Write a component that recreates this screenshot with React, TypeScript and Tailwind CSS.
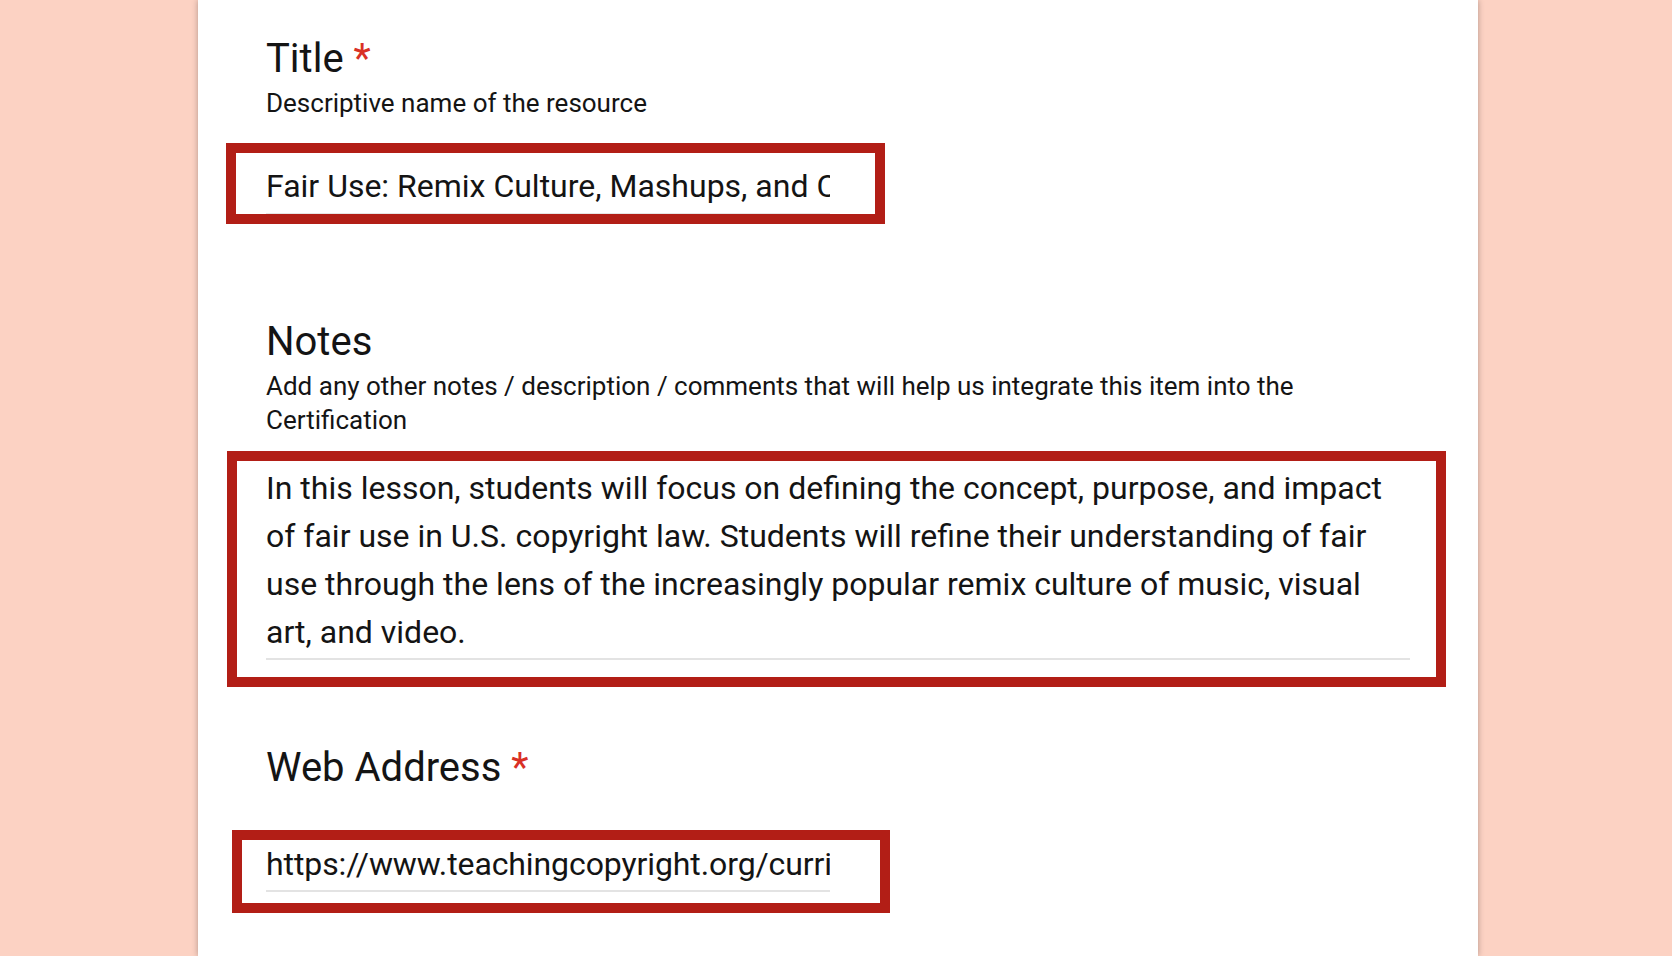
export default function App() {
  return (
    <div className="h-[956px] w-full overflow-hidden bg-[#fcd2c3] font-[Roboto,'Noto_Sans',sans-serif] text-[#141414]">
      <div className="ml-[198px] h-full w-[1280px] bg-white px-[68px] pt-[35px] shadow-[0_0_6px_rgba(0,0,0,0.3)]">
        {/* Title */}
        <h2 className="text-[40px] leading-[48px]">
          Title <span className="text-[#d93025]">*</span>
        </h2>
        <p className="mt-[3px] text-[26px] leading-[34px]">Descriptive name of the resource</p>
        <div className="relative mt-[42px] w-[564px]">
          <div className="overflow-hidden whitespace-nowrap text-[32px] leading-[48px]">
            Fair Use: Remix Culture, Mashups, and Copyright
          </div>
          <div className="mt-[3px] h-[2px] bg-[#e6e6e6]" />
          <div className="pointer-events-none absolute -top-[19px] -bottom-[9px] -left-[40px] -right-[55px] border-[10px] border-[#b21e16]" />
        </div>

        {/* Notes */}
        <h2 className="mt-[103px] text-[40px] leading-[48px]">Notes</h2>
        <p className="mt-[3px] text-[26px] leading-[34px]">
          Add any other notes / description / comments that will help us integrate this item into the
          <br />
          Certification
        </p>
        <div className="relative mt-[27px] w-full">
          <div className="whitespace-nowrap text-[32px] leading-[48px]">
            In this lesson, students will focus on defining the concept, purpose, and impact
            <br />
            of fair use in U.S. copyright law. Students will refine their understanding of fair
            <br />
            use through the lens of the increasingly popular remix culture of music, visual
            <br />
            art, and video.
          </div>
          <div className="mt-[2px] h-[2px] bg-[#e3e3e3]" />
          <div className="pointer-events-none absolute -top-[13px] -bottom-[27px] -left-[39px] -right-[36px] border-[10px] border-[#b21e16]" />
        </div>

        {/* Web Address */}
        <h2 className="mt-[84px] text-[40px] leading-[48px]">
          Web Address <span className="text-[#d93025]">*</span>
        </h2>
        <div className="relative mt-[48px] w-[564px]">
          <div className="overflow-hidden whitespace-nowrap text-[32px] leading-[48px] tracking-[-0.1px]">
            https://www.teachingcopyright.org/curriculum/hs/3
          </div>
          <div className="mt-[2px] h-[2px] bg-[#e3e3e3]" />
          <div className="pointer-events-none absolute -top-[10px] -bottom-[21px] -left-[34px] -right-[60px] border-[10px] border-[#b21e16]" />
        </div>
      </div>
    </div>
  );
}
